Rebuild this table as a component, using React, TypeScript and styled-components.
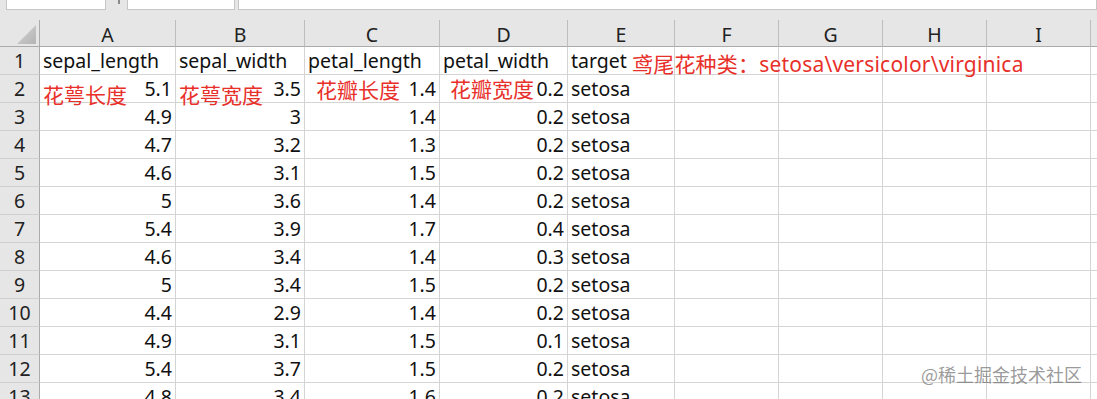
import React from "react";
import styled, { createGlobalStyle } from "styled-components";

const GlobalStyle = createGlobalStyle`
  html, body { margin: 0; padding: 0; background: #fff; }
  body { font-family: "Noto Sans", "Noto Sans CJK SC", sans-serif; }
`;

const FONT = `"Noto Sans", "Noto Sans CJK SC", sans-serif`;

const Page = styled.div`
  width: 1097px;
  height: 399px;
  overflow: hidden;
  position: relative;
  background: #fff;
`;

const TopBand = styled.div`
  height: 20px;
  background: #e6e6e6;
  display: flex;
  align-items: flex-start;
`;

const Box = styled.div<{ $w?: number; $ml: number; $grow?: boolean }>`
  height: 9px;
  margin-left: ${(p) => p.$ml}px;
  width: ${(p) => (p.$w ? `${p.$w}px` : "auto")};
  flex: ${(p) => (p.$grow ? "1" : "none")};
  background: #fff;
  border: 1px solid #c6c6c6;
  border-top: none;
  box-sizing: content-box;
`;

const Dots = styled.div`
  margin-left: 12px;
  width: 3px;
  height: 4px;
  border-left: 2px dotted #8a8a8a;
`;

const cols = [40, 136, 129, 135, 128, 107, 104, 104, 104, 104, 60];

const Grid = styled.div`
  display: grid;
  grid-template-columns: ${cols.map((c) => `${c}px`).join(" ")};
  grid-auto-rows: 28px;
  grid-template-rows: 27px;
`;

const Corner = styled.div`
  background: #e6e6e6;
  border-right: 1px solid #ababab;
  border-bottom: 1px solid #ababab;
  display: flex;
  align-items: flex-end;
  justify-content: flex-end;
  padding: 0 3px 2px 0;
`;

const Triangle = styled.div`
  width: 19px;
  height: 19px;
  background: linear-gradient(135deg, #d4d4d4, #b4b4b4);
  clip-path: polygon(100% 0, 100% 100%, 0 100%);
`;

const ColHead = styled.div<{ $last?: boolean }>`
  background: #e6e6e6;
  border-right: 1px solid ${(p) => (p.$last ? "transparent" : "#bdbdbd")};
  border-bottom: 1px solid #ababab;
  display: flex;
  align-items: center;
  justify-content: center;
  font-family: ${FONT};
  font-size: 19.5px;
  color: #222;
  padding-top: 2px;
`;

const RowHead = styled.div`
  background: #e6e6e6;
  border-right: 1px solid #ababab;
  border-bottom: 1px solid #cfcfcf;
  font-family: ${FONT};
  font-size: 19.5px;
  line-height: 27px;
  color: #222;
  text-align: center;
`;

const Cell = styled.div<{ $align: "left" | "right" }>`
  border-right: 1px solid #d4d4d4;
  border-bottom: 1px solid #d4d4d4;
  font-family: ${FONT};
  font-size: 19.5px;
  line-height: 27px;
  color: #111;
  text-align: ${(p) => p.$align};
  padding: 0 ${(p) => (p.$align === "right" ? "3px" : "0")} 0
    ${(p) => (p.$align === "left" ? "3px" : "0")};
  white-space: nowrap;
`;

const Note = styled.div<{ $x: number; $y: number; $ls?: number }>`
  position: absolute;
  left: ${(p) => p.$x}px;
  top: ${(p) => p.$y}px;
  font-family: ${FONT};
  font-size: 21px;
  line-height: 21px;
  letter-spacing: ${(p) => p.$ls ?? 0}px;
  color: #e8302a;
  white-space: nowrap;
`;

const Watermark = styled.div`
  position: absolute;
  left: 921px;
  top: 364px;
  font-family: "Noto Sans CJK SC", sans-serif;
  font-size: 18px;
  line-height: 20px;
  color: rgba(110, 110, 110, 0.7);
  white-space: nowrap;
`;

const letters = ["A", "B", "C", "D", "E", "F", "G", "H", "I", ""];

const data: (string | number)[][] = [
  ["sepal_length", "sepal_width", "petal_length", "petal_width", "target"],
  [5.1, 3.5, 1.4, 0.2, "setosa"],
  [4.9, 3, 1.4, 0.2, "setosa"],
  [4.7, 3.2, 1.3, 0.2, "setosa"],
  [4.6, 3.1, 1.5, 0.2, "setosa"],
  [5, 3.6, 1.4, 0.2, "setosa"],
  [5.4, 3.9, 1.7, 0.4, "setosa"],
  [4.6, 3.4, 1.4, 0.3, "setosa"],
  [5, 3.4, 1.5, 0.2, "setosa"],
  [4.4, 2.9, 1.4, 0.2, "setosa"],
  [4.9, 3.1, 1.5, 0.1, "setosa"],
  [5.4, 3.7, 1.5, 0.2, "setosa"],
  [4.8, 3.4, 1.6, 0.2, "setosa"],
];

const notes = [
  { x: 632, y: 54, ls: 0.2, text: "鸢尾花种类：setosa\\versicolor\\virginica" },
  { x: 43, y: 85, text: "花萼长度" },
  { x: 179, y: 85, text: "花萼宽度" },
  { x: 316, y: 80, text: "花瓣长度" },
  { x: 450, y: 79, text: "花瓣宽度" },
];

export default function App() {
  return (
    <Page>
      <GlobalStyle />
      <TopBand>
        <Box $w={98} $ml={6} />
        <Dots />
        <Box $w={106} $ml={4} />
        <Box $ml={3} $grow />
      </TopBand>
      <Grid>
        <Corner>
          <Triangle />
        </Corner>
        {letters.map((l, i) => (
          <ColHead key={i} $last={i === letters.length - 1}>
            {l}
          </ColHead>
        ))}
        {data.map((row, r) => (
          <React.Fragment key={r}>
            <RowHead>{r + 1}</RowHead>
            {Array.from({ length: 10 }).map((_, c) => {
              const v = row[c];
              const isNum = typeof v === "number";
              return (
                <Cell key={c} $align={isNum ? "right" : "left"}>
                  {v === undefined ? "" : String(v)}
                </Cell>
              );
            })}
          </React.Fragment>
        ))}
      </Grid>
      {notes.map((n, i) => (
        <Note key={i} $x={n.x} $y={n.y} $ls={n.ls}>
          {n.text}
        </Note>
      ))}
      <Watermark>@稀土掘金技术社区</Watermark>
    </Page>
  );
}
